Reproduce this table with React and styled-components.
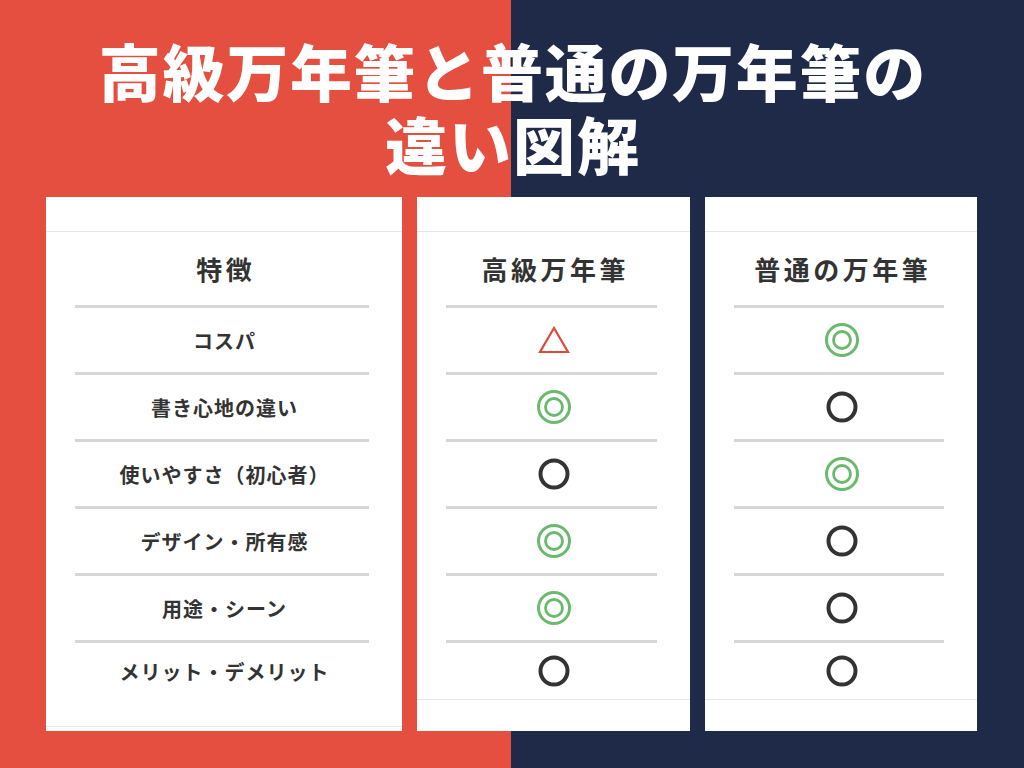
import React from 'react'
import styled, { createGlobalStyle } from 'styled-components'

const GlobalStyle = createGlobalStyle`
  html, body {
    margin: 0;
    padding: 0;
  }
  body {
    font-family: "Noto Sans CJK JP", "Noto Sans", sans-serif;
  }
`

const Page = styled.div`
  width: 1024px;
  height: 768px;
  overflow: hidden;
  background: linear-gradient(to right, #e44f3f 0, #e44f3f 511px, #1e2a47 511px, #1e2a47 100%);
  display: flex;
  flex-direction: column;
  align-items: stretch;
`

const Title = styled.h1`
  margin: 34px 0 0;
  display: flex;
  flex-direction: column;
  align-items: center;
  color: #ffffff;
  font-weight: 900;
  font-size: 62px;
  line-height: 73px;
`

const TitleLine = styled.span`
  letter-spacing: ${props => props.$spacing}px;
  margin-right: -${props => props.$spacing}px;
  white-space: nowrap;
`

const Cards = styled.div`
  display: grid;
  grid-template-columns: 356px 273px 272px;
  column-gap: 15px;
  padding-left: 46px;
  margin-top: 17px;
`

const Card = styled.div`
  background: #ffffff;
  height: 534px;
  display: flex;
  flex-direction: column;
`

const TopStrip = styled.div`
  height: 34px;
  border-bottom: 1px solid #e8e6e6;
`

const Header = styled.div`
  height: 73px;
  display: flex;
  align-items: center;
  justify-content: center;
  color: #333333;
  font-size: 26px;
  font-weight: 700;
  letter-spacing: 3.5px;
  padding-left: 3.5px;
`

const Divider = styled.div`
  height: 3px;
  background: #d6d6d6;
  margin: 0 33px 0 29px;
`

const Cell = styled.div`
  height: ${props => (props.$last ? 56 : 64)}px;
  display: flex;
  align-items: center;
  justify-content: center;
  color: #333333;
  font-size: 20px;
  font-weight: 700;
  letter-spacing: 1px;
  padding-left: 1px;
`

const Foot = styled.div`
  margin-top: ${props => props.$offset}px;
  flex: 1;
  border-top: 1px solid #e6e6e6;
`

const Triangle = () => (
  <svg width="32" height="28" viewBox="0 0 32 28">
    <polygon points="16,2 30,26 2,26" fill="none" stroke="#da4a3d" strokeWidth="2.2" />
  </svg>
)

const DoubleCircle = () => (
  <svg width="36" height="36" viewBox="0 0 36 36">
    <circle cx="18" cy="18" r="15.5" fill="none" stroke="#6ab96d" strokeWidth="3" />
    <circle cx="18" cy="18" r="8.5" fill="none" stroke="#6ab96d" strokeWidth="2.8" />
  </svg>
)

const Circle = () => (
  <svg width="34" height="34" viewBox="0 0 34 34">
    <circle cx="17" cy="17" r="13.5" fill="none" stroke="#333333" strokeWidth="4" />
  </svg>
)

const marks = {
  tri: <Triangle />,
  dbl: <DoubleCircle />,
  o: <Circle />,
}

const columns = [
  {
    title: '特徴',
    foot: 27,
    rows: ['コスパ', '書き心地の違い', '使いやすさ（初心者）', 'デザイン・所有感', '用途・シーン', 'メリット・デメリット'],
  },
  {
    title: '高級万年筆',
    foot: 0,
    rows: ['tri', 'dbl', 'o', 'dbl', 'dbl', 'o'],
  },
  {
    title: '普通の万年筆',
    foot: 0,
    rows: ['dbl', 'o', 'dbl', 'o', 'o', 'o'],
  },
]

const App = () => {
  return (
    <Page>
      <GlobalStyle />
      <Title>
        <TitleLine $spacing={1.7}>高級万年筆と普通の万年筆の</TitleLine>
        <TitleLine $spacing={2}>違い図解</TitleLine>
      </Title>
      <Cards>
        {columns.map((col, i) => (
          <Card key={i}>
            <TopStrip />
            <Header>{col.title}</Header>
            {col.rows.map((row, j) => (
              <React.Fragment key={j}>
                <Divider />
                <Cell $last={j === col.rows.length - 1}>{marks[row] || row}</Cell>
              </React.Fragment>
            ))}
            <Foot $offset={col.foot} />
          </Card>
        ))}
      </Cards>
    </Page>
  )
}

export default App
